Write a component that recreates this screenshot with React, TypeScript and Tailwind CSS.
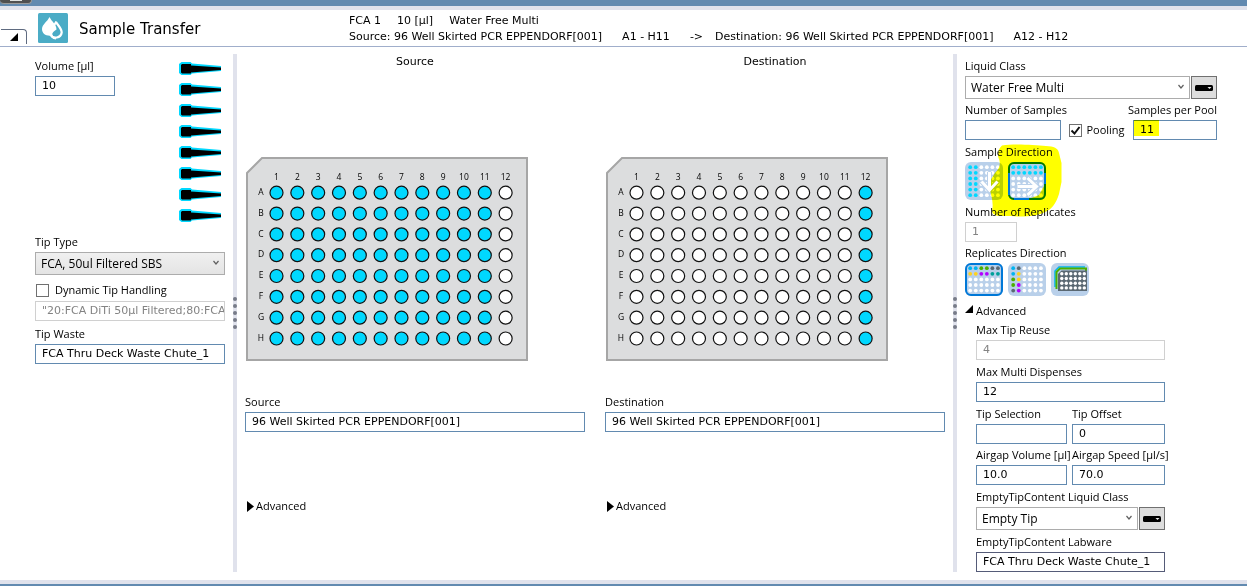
import React, { useId } from 'react';

const ROWS = ['A', 'B', 'C', 'D', 'E', 'F', 'G', 'H'];
const COLS = [1, 2, 3, 4, 5, 6, 7, 8, 9, 10, 11, 12];

const BLUE = '#00b4f0';
const GREEN = '#4caf00';
const SLATE = '#5a6872';
const YELLOW = '#ffd21e';
const PURPLE = '#b400ff';
const TEAL = '#00a09a';
const CYAN = '#00d8ff';

type FieldProps = {
  label: string;
  value?: string;
  disabled?: boolean;
  className?: string;
  inputClass?: string;
  alignRight?: boolean;
  mark?: boolean;
};

function Field({ label, value = '', disabled, className = '', inputClass = 'border-[#628ab0] text-black', alignRight, mark }: FieldProps) {
  const id = useId();
  return (
    <div className={`flex min-w-0 flex-col ${className}`}>
      <label htmlFor={id} className={`h-5 whitespace-nowrap leading-5 ${alignRight ? 'self-end' : ''}`}>{label}</label>
      <div className="relative">
        <input
          id={id}
          defaultValue={value}
          disabled={disabled}
          className={`block h-5 w-full border bg-white px-1.5 pb-0.5 font-['DejaVu_Sans',sans-serif] text-[11px] ${disabled ? 'border-[#d0d0d0] text-[#838383]' : inputClass}`}
        />
        {mark && <span className="pointer-events-none absolute top-0 left-px h-4 w-[25px] bg-[#ffff00] mix-blend-multiply" />}
      </div>
    </div>
  );
}

function Select({ label, value, shaded, className = '' }: { label: string; value: string; shaded?: boolean; className?: string }) {
  const id = useId();
  return (
    <div className={`flex flex-col ${className}`}>
      <label htmlFor={id} className="h-5 leading-5 whitespace-nowrap">{label}</label>
      <div className="flex gap-px">
        <div className="relative flex-1">
          <select
            id={id}
            className={`block h-[23px] w-full appearance-none border border-[#acacac] px-[5px] text-xs ${shaded ? 'bg-linear-to-b from-[#f0f0f0] to-[#e4e4e4]' : 'bg-white'}`}
          >
            <option>{value}</option>
          </select>
          <svg className="pointer-events-none absolute top-2 right-1.5 h-1.5 w-1.5" viewBox="0 0 6 6" fill="none" stroke="#606060" strokeWidth="1.2">
            <path d="M0.5 1 3 4 5.5 1" />
          </svg>
        </div>
        {!shaded && (
          <button type="button" aria-label={`${label} options`} className="flex h-[23px] w-[26px] items-center justify-center border border-[#707070] bg-[#dddddd]">
            <svg className="h-1.5 w-[18px]" viewBox="0 0 18 6">
              <rect width="18" height="6" rx="1.5" fill="#000" />
              <path d="M12.5 2h4l-2 2z" fill="#eee" />
            </svg>
          </button>
        )}
      </div>
    </div>
  );
}

function Plate({ filled }: { filled: (col: number) => boolean }) {
  const step = 20.83;
  return (
    <svg className="h-[204px] w-[282px]" viewBox="0 0 282 204" role="img">
      <path d="M16 1H281V203H1V16Z" fill="#dcddde" stroke="#a6a6a6" strokeWidth="2" />
      <g fontFamily="'Open Sans', sans-serif" fontSize="8.5" textAnchor="middle" fill="#000">
        {COLS.map((c, i) => <text key={c} x={30.5 + i * step} y="23">{c}</text>)}
        {ROWS.map((r, j) => <text key={r} x="15" y={38 + j * step}>{r}</text>)}
      </g>
      {ROWS.map((r, j) =>
        COLS.map((c, i) => (
          <circle key={r + c} cx={30.5 + i * step} cy={35.7 + j * step} r="6.5" fill={filled(c) ? '#00d8ff' : '#fff'} stroke="#111" strokeWidth="1.2" />
        ))
      )}
    </svg>
  );
}

function Station({ title, labware, filled }: { title: string; labware: string; filled: (col: number) => boolean }) {
  return (
    <section className="flex min-w-0 flex-1 flex-col">
      <h2 className="h-[103px] pt-0.5 text-center font-['DejaVu_Sans',sans-serif] text-[11px] leading-3">{title}</h2>
      <div className="pl-px">
        <Plate filled={filled} />
      </div>
      <Field label={title} value={labware} className="mt-[31px]" />
      <button type="button" aria-expanded="false" className="mt-16 flex h-5 items-center gap-0.5 self-start pl-0.5">
        <svg className="h-[11px] w-[7px]" viewBox="0 0 7 11"><path d="M0 0 7 5.5 0 11Z" fill="#000" /></svg>
        Advanced
      </button>
    </section>
  );
}

function Splitter() {
  return (
    <div className="flex w-1 shrink-0 flex-col items-center justify-center gap-[3px] bg-[#e0e2ec]">
      {[0, 1, 2, 3, 4].map((n) => <span key={n} className="size-1 rounded-full bg-[#777b88]" />)}
    </div>
  );
}

function Dots({ rows, color }: { rows: number; color: (r: number, c: number) => string }) {
  return (
    <>
      {Array.from({ length: rows * 6 }, (_, n) => {
        const r = Math.floor(n / 6);
        const c = n % 6;
        return <circle key={n} cx={5.2 + c * 5.55} cy={5.2 + r * 5.6} r="1.9" fill={color(r, c)} />;
      })}
    </>
  );
}

const ARROW_DOWN = 'M24.5 10V28M16.5 19.5 24.5 28 32.5 19.5';
const ARROW_RIGHT = 'M9.5 24.5H28M19.5 16 28.5 24.5 19.5 33';

function Arrow({ d }: { d: string }) {
  return (
    <g fill="none">
      <path d={d} stroke="#b9d0ea" strokeWidth="5" />
      <path d={d} stroke="#fff" strokeWidth="3" />
    </g>
  );
}

function SampleDirection() {
  return (
    <div className="relative flex h-[38px] w-[81px] gap-[5px]">
      <button type="button" aria-label="By column" className="size-[38px] overflow-hidden rounded-md bg-[#b9d0ea]">
        <svg className="size-full" viewBox="0 0 38 38">
          <Dots rows={6} color={(_, c) => (c < 2 ? CYAN : '#fff')} />
          <Arrow d={ARROW_DOWN} />
        </svg>
      </button>
      <button type="button" aria-label="By row" aria-pressed="true" className="relative size-[38px] rounded-md bg-[#b9d0ea]">
        <svg className="size-full" viewBox="0 0 38 38">
          <Dots rows={6} color={(r) => (r < 2 ? CYAN : '#fff')} />
          <Arrow d={ARROW_RIGHT} />
          <rect x="1" y="1" width="36" height="36" rx="5" fill="none" stroke="#0078d7" strokeWidth="2" />
        </svg>
      </button>
      {/* Marker stroke around the selected direction */}
      <svg className="pointer-events-none absolute -top-5 left-5 h-20 w-20 mix-blend-multiply" viewBox="985 142 80 80">
        <mask id="marker" maskUnits="userSpaceOnUse" x="985" y="142" width="80" height="80">
          <rect x="985" y="142" width="80" height="80" fill="#fff" />
          <path d="M1010 168q0-4 4-4h26q4 0 4 4v18l-5 9-8 3h-17q-4 0-4-4z" fill="#000" />
          <path d="M1008 173h3v22h-3z M1014 197h15v3h-15z M1043 173h3v11h-3z" fill="#000" />
          <g transform="translate(965 162)"><path d={ARROW_DOWN} fill="none" stroke="#000" strokeWidth="3" /></g>
        </mask>
        <path
          mask="url(#marker)"
          fill="#ffff00"
          d="M1002 145.500C1014 143.500 1034 145 1046 146C1054 146.500 1058 148 1059 153L1061.500 163V182L1059 194C1056 204 1051 210 1045 212C1036 217 1020 217 1011 216C1001 216 993 217 992 211C994 203 991 195 989.500 188C988.500 182 992 178 995 173C1000 168 1001 163 998.500 158C997 153 999 148 1002 145.500Z"
        />
      </svg>
    </div>
  );
}

const byRow = [
  [BLUE, BLUE, GREEN, GREEN, SLATE, SLATE],
  [YELLOW, YELLOW, PURPLE, PURPLE, TEAL, TEAL],
];
const byCol = [
  [BLUE, SLATE],
  [BLUE, YELLOW],
  [GREEN, YELLOW],
  [GREEN, PURPLE],
  [SLATE, PURPLE],
];

function ReplicatesDirection() {
  return (
    <div className="flex gap-[5px]">
      <button type="button" aria-label="Replicates by row" aria-pressed="true" className="h-[33px] w-[38px] rounded-md bg-[#b9d0ea]">
        <svg className="size-full" viewBox="0 0 38 33">
          <Dots rows={5} color={(r, c) => byRow[r]?.[c] ?? '#fff'} />
          <rect x="1" y="1" width="36" height="31" rx="5" fill="none" stroke="#0078d7" strokeWidth="2" />
        </svg>
      </button>
      <button type="button" aria-label="Replicates by column" className="h-[33px] w-[38px] rounded-md bg-[#b9d0ea]">
        <svg className="size-full" viewBox="0 0 38 33">
          <Dots rows={5} color={(r, c) => byCol[r][c] ?? '#fff'} />
        </svg>
      </button>
      <button type="button" aria-label="Replicates by labware" className="h-[33px] w-[38px] rounded-md bg-[#b9d0ea]">
        <svg className="size-full" viewBox="0 0 38 33">
          <path d="M4 24V8L8 4H34" fill="none" stroke={BLUE} strokeWidth="1.500" />
          <path d="M5.500 26V9L9 5.500H35V8" fill="none" stroke={GREEN} strokeWidth="2" />
          <path d="M10.500 7.500H36V28H7V11Z" fill={SLATE} />
          {Array.from({ length: 24 }, (_, n) => (
            <circle key={n} cx={10.8 + (n % 6) * 4.5} cy={10.8 + Math.floor(n / 6) * 4.7} r="1.700" fill="#fff" />
          ))}
        </svg>
      </button>
    </div>
  );
}

function Tips() {
  return (
    <svg className="mt-1.5 h-[162px] w-[42px]" viewBox="0 0 42 162" role="img" aria-label="Eight tips">
      {ROWS.map((r, i) => (
        <g key={r} transform={`translate(0 ${i * 21})`}>
          <path d="M2.500 0H11.500L13 1.500 42 4V9L13 11.500 11.500 13H2.500L0 11V2Z" fill="#00d8ff" />
          <path d="M3 2H12V3.500L42 5.500V8L12 10.500V11.500H3L2 10.500V3Z" fill="#000" />
        </g>
      ))}
    </svg>
  );
}

export default function App() {
  return (
    <div className="flex min-h-screen flex-col overflow-hidden bg-white font-['Open_Sans',sans-serif] text-[11px] text-black">
      <div className="h-1.5 bg-[#628ab0]">
        <div className="flex h-1 w-8 justify-center rounded-b-sm border-r border-b border-[#999] bg-[#505050]">
          <span className="h-px w-3 bg-[#e0e2e0]" />
        </div>
      </div>
      <div className="h-1 bg-[#e0e2ec]" />

      <header className="flex h-[37px] border-b border-[#a0aecb]">
        <button type="button" aria-label="Collapse" className="mt-[19px] ml-px flex h-[15px] w-[26px] items-center justify-center rounded-tr-sm border-t border-r border-[#5f6b80]">
          <svg className="h-2 w-2" viewBox="0 0 8 8"><path d="M8 0V8H0Z" fill="#000" /></svg>
        </button>
        <svg className="mt-[3px] ml-[11px] size-[30px]" viewBox="0 0 30 30">
          <rect width="30" height="30" rx="1.500" fill="#4bacc6" />
          <path d="M18 9C20 12.500 23.700 15.500 23.700 19.500A6 6 0 0 1 12.500 21.500" fill="none" stroke="#fff" strokeWidth="2.200" />
          <path d="M18.300 8.500C16.500 12.500 13.500 15 13 19 12.500 23 15 25.500 18 25.500" fill="none" stroke="#fff" strokeWidth="2" />
          <path d="M11.500 4C13.500 8.500 18.500 11.500 18.500 16.500 16 18 14 19.500 14 22.500 8.500 23.500 4 21 4 16 4 11.500 9.500 8.500 11.500 4Z" fill="#fff" />
        </svg>
        <h1 className="ml-[11px] w-[270px] pt-[7px] font-['DejaVu_Sans',sans-serif] text-[15px] leading-6">Sample Transfer</h1>
        <div className="pt-[3px] font-['DejaVu_Sans',sans-serif] text-[11px] leading-4 whitespace-nowrap">
          <p className="flex gap-4"><span>FCA 1</span><span>10 [µl]</span><span>Water Free Multi</span></p>
          <p className="flex gap-5">
            <span>Source: 96 Well Skirted PCR EPPENDORF[001]</span>
            <span>A1 - H11</span>
            <span className="-mr-2">-&gt;</span>
            <span>Destination: 96 Well Skirted PCR EPPENDORF[001]</span>
            <span>A12 - H12</span>
          </p>
        </div>
      </header>

      <main className="flex flex-1 pt-[7px] pb-2">
        <aside className="w-[233px] shrink-0 pt-0.5 pr-2 pl-[35px]">
          <div className="flex h-44 justify-between pr-1">
            <Field label="Volume [µl]" value="10" className="w-20" />
            <Tips />
          </div>
          <Select label="Tip Type" value="FCA, 50ul Filtered SBS" shaded />
          <label className="mt-[5px] flex h-5 items-center gap-1.5">
            <input type="checkbox" className="ml-px size-[13px] appearance-none border border-[#707070] bg-white" />
            Dynamic Tip Handling
          </label>
          <input
            aria-label="Dynamic tip rule"
            disabled
            defaultValue={'"20:FCA DiTi 50µl Filtered;80:FCA DiTi'}
            className="mt-px block h-5 w-full border border-[#d0d0d0] bg-white pb-0.5 pl-1.5 font-['DejaVu_Sans',sans-serif] text-[11px] text-[#838383]"
          />
          <Field label="Tip Waste" value="FCA Thru Deck Waste Chute_1" className="mt-[3px]" />
        </aside>

        <Splitter />

        <div className="flex min-w-0 flex-1 gap-5 px-2">
          <Station title="Source" labware="96 Well Skirted PCR EPPENDORF[001]" filled={(c) => c < 12} />
          <Station title="Destination" labware="96 Well Skirted PCR EPPENDORF[001]" filled={(c) => c === 12} />
        </div>

        <Splitter />

        <aside className="w-[290px] shrink-0 pt-0.5 pr-[30px] pl-2">
          <Select label="Liquid Class" value="Water Free Multi" />
          <div className="mt-px flex items-end justify-between">
            <Field label="Number of Samples" className="w-24" />
            <label className="flex h-5 items-center gap-1">
              <span className="relative flex size-[13px]">
                <input type="checkbox" defaultChecked className="peer size-[13px] appearance-none border border-[#707070] bg-white" />
                <svg className="pointer-events-none absolute inset-0 hidden size-[13px] peer-checked:block" viewBox="0 0 13 13" fill="none" stroke="#111" strokeWidth="2">
                  <path d="M2.500 6.500 5.500 9.500 10.500 3" />
                </svg>
              </span>
              Pooling
            </label>
            <Field label="Samples per Pool" value="11" className="w-[84px]" alignRight mark />
          </div>
          <div className="mt-0.5 h-5 leading-5">Sample Direction</div>
          <SampleDirection />
          <Field label="Number of Replicates" value="1" disabled className="mt-0.5 w-[52px]" />
          <div className="mt-px h-5 leading-5">Replicates Direction</div>
          <ReplicatesDirection />
          <button type="button" aria-expanded="true" className="mt-1.5 flex h-[18px] items-center gap-[3px]">
            <svg className="mb-1 h-2 w-2" viewBox="0 0 8 8"><path d="M8 0V8H0Z" fill="#000" /></svg>
            Advanced
          </button>
          <div className="flex w-[200px] flex-col gap-0.5 pl-[11px]">
            <Field label="Max Tip Reuse" value="4" disabled />
            <Field label="Max Multi Dispenses" value="12" />
            <div className="grid grid-cols-[91px_minmax(0,1fr)] gap-x-[5px] gap-y-px">
              <Field label="Tip Selection" />
              <Field label="Tip Offset" value="0" />
              <Field label="Airgap Volume [µl]" value="10.0" />
              <Field label="Airgap Speed [µl/s]" value="70.0" />
            </div>
            <Select label="EmptyTipContent Liquid Class" value="Empty Tip" />
            <Field label="EmptyTipContent Labware" value="FCA Thru Deck Waste Chute_1" inputClass="border-[#555b78] text-black" />
          </div>
        </aside>
      </main>

      <div className="h-1 bg-[#e0e2ec]" />
      <div className="h-0.5 bg-[#628ab0]" />
    </div>
  );
}
